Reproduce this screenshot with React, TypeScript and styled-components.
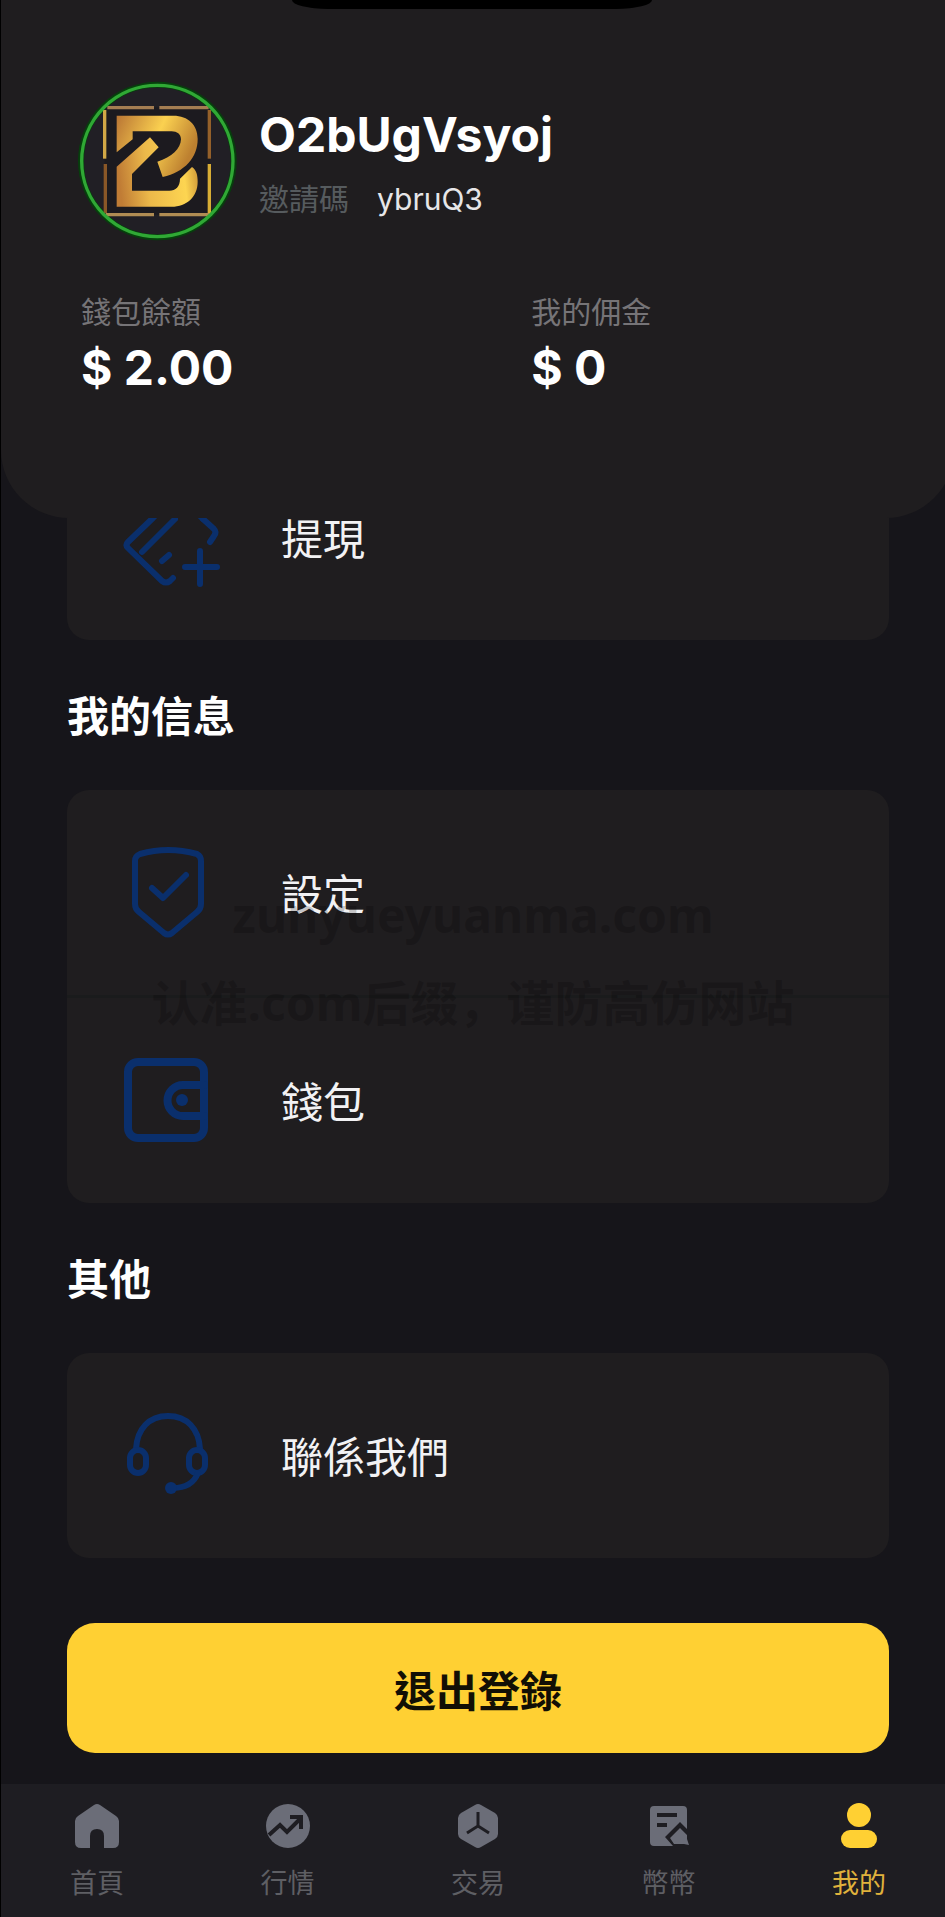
import React from 'react';
import styled, { createGlobalStyle, css } from 'styled-components';

const color = {
  page: '#16151a',
  panel: '#1f1d1f',
  nav: '#1e1d22',
  line: '#1a1b1c',
  blue: '#0a2f6c',
  yellow: '#ffd033',
  text: '#ffffff',
  muted: '#767477',
  navIcon: '#6b6d78',
  navText: '#5e5f64',
};

const GlobalStyle = createGlobalStyle`
  * { box-sizing: border-box; }
  body {
    margin: 0;
    background: ${color.page};
    color: ${color.text};
    font-family: Inter, 'Noto Sans CJK TC', sans-serif;
  }
`;

const Page = styled.div`
  position: relative;
  display: flex;
  flex-direction: column;
  min-height: 100vh;
  overflow-x: clip;
  border-left: 1px solid #000;
  background: ${color.page};
`;

const Notch = styled.div`
  position: absolute;
  top: 0;
  left: 50%;
  width: 360px;
  height: 9px;
  margin-left: -186px;
  border-radius: 0 0 36px 36px / 0 0 9px 9px;
  background: #000;
`;

const Header = styled.header`
  position: relative;
  z-index: 1;
  display: flex;
  flex-direction: column;
  gap: 53px;
  margin-right: -9px;
  padding: 81px 90px 120px 76px;
  border-radius: 0 0 68px 68px;
  background: ${color.panel};
`;

const Profile = styled.div`
  display: flex;
  align-items: center;
  gap: 22px;
`;

const Identity = styled.div`
  display: flex;
  flex-direction: column;
  gap: 16px;
`;

const bigText = css`
  margin: 0;
  font-size: 48px;
  line-height: 60px;
  font-weight: 700;
`;

const UserName = styled.h1`
  ${bigText}
`;

const Invite = styled.p`
  display: flex;
  gap: 28px;
  margin: 0;
  font-size: 30px;
  line-height: 36px;
  color: #e6e6e8;
`;

const InviteLabel = styled.span`
  color: #565b5e;
`;

const Balances = styled.dl`
  display: grid;
  grid-template-columns: 23fr 17fr;
  margin: 0;
  padding-left: 4px;
`;

const Balance = styled.div`
  display: flex;
  flex-direction: column;
  gap: 8px;
`;

const BalanceLabel = styled.dt`
  font-size: 30px;
  line-height: 36px;
  color: ${color.muted};
`;

const BalanceValue = styled.dd`
  ${bigText}
`;

const Main = styled.main`
  flex: 1;
  display: flex;
  flex-direction: column;
  margin-top: -83px;
  padding: 0 56px 31px 66px;
`;

const SectionTitle = styled.h2`
  margin: 47px 0 43px;
  font-size: 42px;
  line-height: 60px;
  font-weight: 700;
`;

const Card = styled.div`
  overflow: hidden;
  border-radius: 22px;
  background: ${color.panel};
`;

const Row = styled.a`
  display: flex;
  align-items: center;
  gap: 65px;
  min-height: 205px;
  padding: 0 53px;
  color: #f2f2f4;
  font-size: 42px;
  line-height: 60px;
  text-decoration: none;

  & + & {
    min-height: 208px;
    border-top: 3px solid ${color.line};
  }
`;

const RowLabel = styled.span`
  padding-top: 4px;
`;

const RowIcon = styled.svg`
  flex: none;
  width: 96px;
  height: 96px;
  overflow: visible;
  fill: none;
  stroke: ${color.blue};
  stroke-linecap: round;
  stroke-linejoin: round;
`;

const LogoutButton = styled.button`
  height: 130px;
  margin-top: 65px;
  border: 0;
  border-radius: 28px;
  background: ${color.yellow};
  color: #120f05;
  font: inherit;
  font-size: 42px;
  font-weight: 700;
`;

const TabBar = styled.nav`
  display: flex;
  justify-content: space-between;
  padding: 18px 59px 15px 69px;
  background: ${color.nav};
`;

const Tab = styled.a<{ $active?: boolean }>`
  display: flex;
  flex-direction: column;
  align-items: center;
  gap: 16px;
  color: ${(p) => (p.$active ? '#e0b23c' : color.navText)};
  font-size: 27px;
  line-height: 36px;
  text-decoration: none;
`;

const TabIcon = styled.svg<{ $active?: boolean }>`
  width: 48px;
  height: 48px;
  fill: ${(p) => (p.$active ? color.yellow : color.navIcon)};
`;

const Watermark = styled.div`
  position: absolute;
  inset: 0;
  z-index: 2;
  display: flex;
  flex-direction: column;
  align-items: center;
  justify-content: center;
  pointer-events: none;
  color: rgba(0, 0, 0, 0.2);
  font-family: 'Noto Sans', 'Noto Sans CJK SC', sans-serif;
  font-size: 48px;
  line-height: 88px;
  font-weight: 700;
  white-space: nowrap;
`;

const Avatar = () => (
  <svg width="160" height="160" viewBox="21 33 480 480" role="img" aria-label="avatar">
    <defs>
      <linearGradient id="gold" x1="0" y1="0" x2="1" y2="0.35">
        <stop offset="0" stopColor="#b97534" />
        <stop offset="0.55" stopColor="#fbd150" />
        <stop offset="1" stopColor="#bd8030" />
      </linearGradient>
      <linearGradient id="goldLow" x1="0" y1="0.3" x2="1" y2="0.2">
        <stop offset="0" stopColor="#c07c35" />
        <stop offset="0.35" stopColor="#ecb94a" />
        <stop offset="0.8" stopColor="#fdd551" />
        <stop offset="1" stopColor="#c89035" />
      </linearGradient>
    </defs>
    <circle cx="262" cy="273" r="229" fill="#211f25" stroke="#063f0c" strokeWidth="18" />
    <rect x="104" y="112" width="316" height="322" fill="#1c1a1f" />
    <g fill="none" strokeWidth="10">
      <path d="M112 113H252M268 113H416" stroke="#a47d52" />
      <path d="M104 120V266" stroke="#d2a746" />
      <path d="M106 282V430" stroke="#8a5727" />
      <path d="M418 120V266" stroke="#94602a" />
      <path d="M418 282V434" stroke="#d8ad35" />
      <path d="M108 434H252M268 434H418" stroke="#b08c53" />
    </g>
    <path
      fill="url(#gold)"
      d="M140 137H310C355 137 383 165 383 207C383 262 345 306 278 321L262 275C306 262 332 236 333 208C333 192 321 184 305 184H188V208L140 247Z"
    />
    <path
      fill="url(#goldLow)"
      d="M240 202L266 232L186 312V362H298C317 362 330 350 330 326L366 291C380 300 383 318 383 335C383 380 350 410 305 410H140V290Z"
    />
    <circle cx="262" cy="273" r="227" fill="none" stroke="#30a835" strokeWidth="10" />
  </svg>
);

const WithdrawIcon = () => (
  <RowIcon viewBox="0 0 96 96" strokeWidth="6" aria-hidden="true">
    <path d="M83 29L62 8Q57 3 52 8L33 28L8 52Q5 55 8 58L42 91Q46 94 50 91L53 88" />
    <path d="M83 29L94 39Q97 42 94 46L90 52" />
    <path d="M22 62L55 29M49 65L42 71" />
    <path d="M65 77H97M80 61V94" />
  </RowIcon>
);

const SettingsIcon = () => (
  <RowIcon viewBox="0 0 96 96" strokeWidth="6" aria-hidden="true">
    <path d="M20 9Q48 1 77 9Q81 11 81 16V59Q81 64 77 67L52 88Q48 91 44 88L19 67Q15 64 15 59V16Q15 11 20 9Z" />
    <path d="M32 43L43 53L66 30" />
  </RowIcon>
);

const WalletIcon = () => (
  <RowIcon viewBox="0 0 96 96" strokeWidth="8" aria-hidden="true">
    <rect x="8" y="9" width="76" height="76" rx="10" />
    <path d="M84 32H63A15 15 0 0 0 63 63H84" />
    <circle cx="62" cy="47" r="6" fill={color.blue} stroke="none" />
  </RowIcon>
);

const ContactIcon = () => (
  <RowIcon viewBox="0 0 96 96" strokeWidth="6" aria-hidden="true">
    <path d="M16 41C17 21 29 8 48 8S79 21 80 41" />
    <rect x="10" y="42" width="16" height="23" rx="8" />
    <rect x="69" y="42" width="16" height="23" rx="8" />
    <path d="M78 65Q72 80 53 80" />
    <circle cx="51" cy="80" r="6" fill={color.blue} stroke="none" />
  </RowIcon>
);

const HomeIcon = () => (
  <TabIcon viewBox="0 0 48 48" aria-hidden="true">
    <path d="M21 3Q24 1 27 3L43 14Q46 16 46 19V40Q46 46 40 46H31V34Q31 27 24 27T17 34V46H8Q2 46 2 40V19Q2 16 5 14Z" />
  </TabIcon>
);

const MarketIcon = () => (
  <TabIcon viewBox="0 0 48 48" aria-hidden="true">
    <circle cx="24" cy="24" r="22" />
    <path d="M5 33L16 23L23 30L36 17M26 15H37V27" fill="none" stroke={color.nav} strokeWidth="4" />
  </TabIcon>
);

const TradeIcon = () => (
  <TabIcon viewBox="0 0 48 48" aria-hidden="true">
    <path d="M21 3Q24 1 27 3L41 11Q44 13 44 16V32Q44 35 41 37L27 45Q24 47 21 45L7 37Q4 35 4 32V16Q4 13 7 11Z" />
    <path d="M24 10V24L13 31M24 24L35 31" fill="none" stroke={color.nav} strokeWidth="3" />
  </TabIcon>
);

const CoinsIcon = () => (
  <TabIcon viewBox="0 0 48 48" aria-hidden="true">
    <path d="M9 4H38Q42 4 42 8V27L35 20L20 35L28 44H9Q5 44 5 40V8Q5 4 9 4Z" />
    <path d="M12 13H32M12 23H22" fill="none" stroke={color.nav} strokeWidth="4" />
    <path d="M35 26L42 33V37L44 43L39 42H29L25 36Z" />
  </TabIcon>
);

const MeIcon = () => (
  <TabIcon $active viewBox="0 0 48 48" aria-hidden="true">
    <ellipse cx="24" cy="13" rx="12" ry="12" />
    <rect x="6" y="28" width="36" height="18" rx="9" />
  </TabIcon>
);

const infoRows = [
  { label: '設定', icon: <SettingsIcon /> },
  { label: '錢包', icon: <WalletIcon /> },
];

const tabs = [
  { label: '首頁', icon: <HomeIcon /> },
  { label: '行情', icon: <MarketIcon /> },
  { label: '交易', icon: <TradeIcon /> },
  { label: '幣幣', icon: <CoinsIcon /> },
  { label: '我的', icon: <MeIcon />, active: true },
];

export default function App() {
  return (
    <Page lang="zh-Hant">
      <GlobalStyle />
      <Header>
        <Notch />
        <Profile>
          <Avatar />
          <Identity>
            <UserName>O2bUgVsyoj</UserName>
            <Invite>
              <InviteLabel>邀請碼</InviteLabel>
              <span>ybruQ3</span>
            </Invite>
          </Identity>
        </Profile>
        <Balances>
          <Balance>
            <BalanceLabel>錢包餘額</BalanceLabel>
            <BalanceValue>$ 2.00</BalanceValue>
          </Balance>
          <Balance>
            <BalanceLabel>我的佣金</BalanceLabel>
            <BalanceValue>$ 0</BalanceValue>
          </Balance>
        </Balances>
      </Header>
      <Main>
        <Card>
          <Row href="#withdraw">
            <WithdrawIcon />
            <RowLabel>提現</RowLabel>
          </Row>
        </Card>
        <SectionTitle>我的信息</SectionTitle>
        <Card>
          {infoRows.map((row) => (
            <Row key={row.label} href={'#' + row.label}>
              {row.icon}
              <RowLabel>{row.label}</RowLabel>
            </Row>
          ))}
        </Card>
        <SectionTitle>其他</SectionTitle>
        <Card>
          <Row href="#contact">
            <ContactIcon />
            <RowLabel>聯係我們</RowLabel>
          </Row>
        </Card>
        <LogoutButton type="button">退出登錄</LogoutButton>
      </Main>
      <TabBar>
        {tabs.map((tab) => (
          <Tab key={tab.label} href={'#' + tab.label} $active={tab.active}>
            {tab.icon}
            {tab.label}
          </Tab>
        ))}
      </TabBar>
      <Watermark lang="zh-Hans">
        <span>zunyueyuanma.com</span>
        <span>认准.com后缀，谨防高仿网站</span>
      </Watermark>
    </Page>
  );
}
